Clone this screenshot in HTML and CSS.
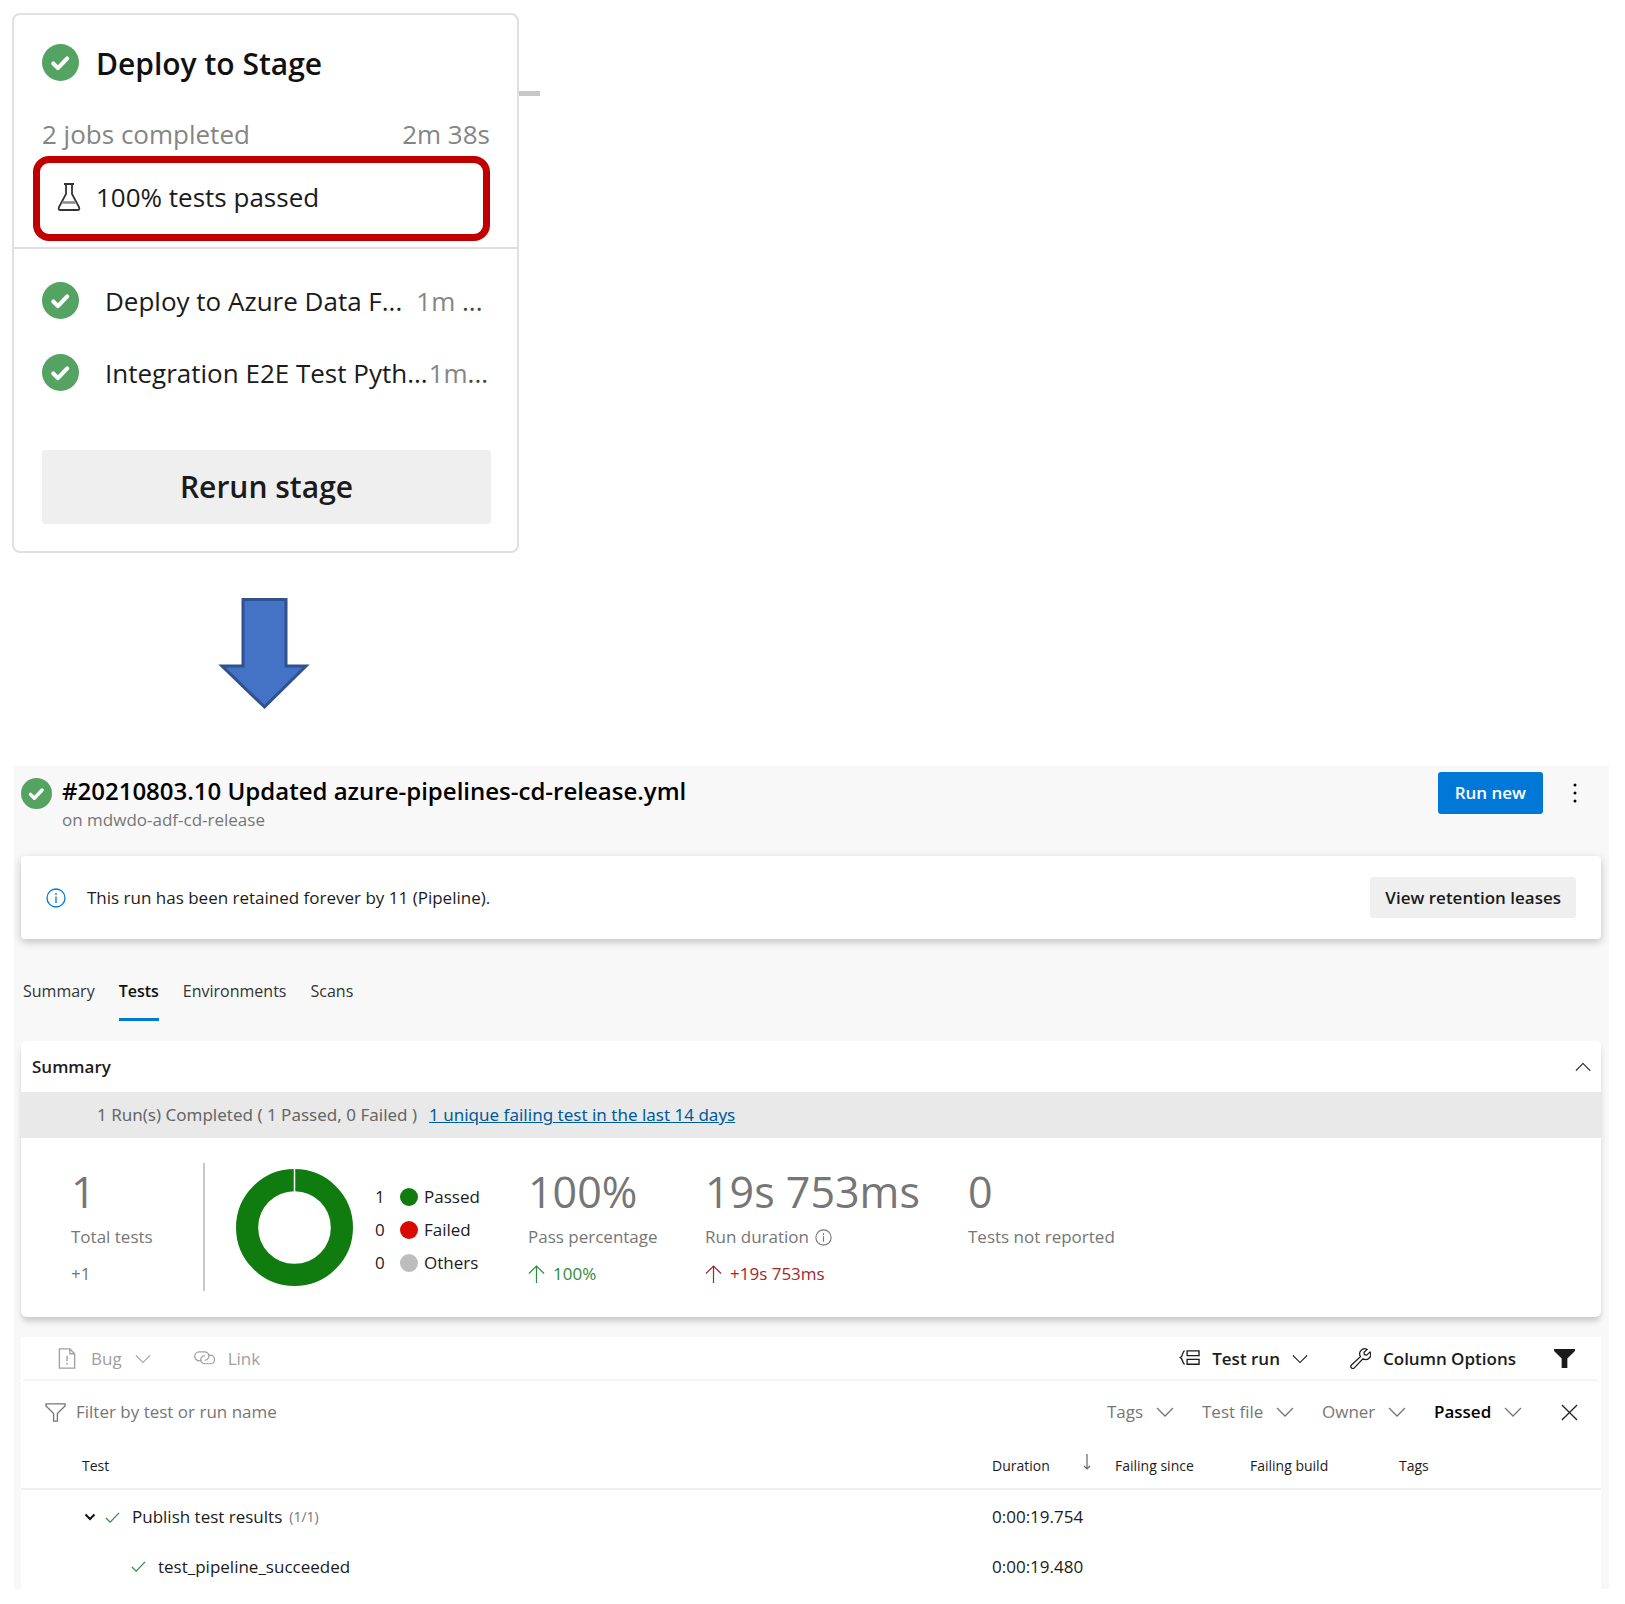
FILE: index.html
```html
<!DOCTYPE html>
<html lang="en">
<head>
<meta charset="utf-8">
<title>Pipeline test results</title>
<link rel="stylesheet" href="styles.css">
</head>
<body>
<svg class="defs" aria-hidden="true">
  <symbol id="ok" viewBox="0 0 36 36"><circle cx="18" cy="18" r="18" fill="#55a362"/><path d="M11 19l4.500 4.500 9-9.500" fill="none" stroke="#fff" stroke-width="4" stroke-linecap="round" stroke-linejoin="round"/></symbol>
  <symbol id="chev" viewBox="0 0 18 18"><path d="M1 5l8 8 8-8" fill="none" stroke="currentColor" stroke-width="1.300"/></symbol>
  <symbol id="tick" viewBox="0 0 16 16"><path d="M1 8.500l4.500 4.500L15 3" fill="none" stroke="#2f8a3b" stroke-width="1.300"/></symbol>
  <symbol id="info" viewBox="0 0 20 20"><circle cx="10" cy="10" r="9" fill="none" stroke="currentColor" stroke-width="1.300"/><path d="M10 8.500v6.500M10 5v2" stroke="currentColor" stroke-width="1.300"/></symbol>
  <symbol id="up" viewBox="0 0 18 20"><path d="M9 19V1M1 9l8-8 8 8" fill="none" stroke="currentColor" stroke-width="1.300"/></symbol>
</svg>

<section class="stage">
  <header class="stage-head">
    <div class="stage-title"><svg class="ok"><use href="#ok"/></svg><h2>Deploy to Stage</h2></div>
    <div class="stage-meta"><span>2 jobs completed</span><span>2m 38s</span></div>
    <div class="tests-passed">
      <svg class="flask" viewBox="0 0 24 30"><path d="M7 2h10M9 2v10L2 25q-1 3 1 3h18q2 0 1-3L15 12V2" fill="none" stroke="#333" stroke-width="1.800"/><path d="M5.500 20.500h13" stroke="#888" stroke-width="2.500"/></svg>
      <span>100% tests passed</span>
    </div>
  </header>
  <ul class="jobs">
    <li><svg class="ok"><use href="#ok"/></svg><span>Deploy to Azure Data F...</span><span class="time">1m <b>...</b></span></li>
    <li><svg class="ok"><use href="#ok"/></svg><span>Integration E2E Test Pyth...</span><span class="time tight">1m<b>...</b></span></li>
  </ul>
  <button class="rerun" type="button">Rerun stage</button>
</section>

<svg class="arrow" viewBox="0 0 92 112"><path d="M25 1.500h43V68h20L46.500 109 4 68h21z" fill="#4472c4" stroke="#2f528f" stroke-width="3"/></svg>

<main class="run">
  <header class="run-head">
    <svg class="ok-small"><use href="#ok"/></svg>
    <div class="run-name"><h1>#20210803.10 Updated azure-pipelines-cd-release.yml</h1><p>on mdwdo-adf-cd-release</p></div>
    <button class="primary" type="button">Run new</button>
    <button class="kebab" type="button" aria-label="More actions"><svg viewBox="0 0 4 20"><circle cx="2" cy="2" r="1.500"/><circle cx="2" cy="10" r="1.500"/><circle cx="2" cy="18" r="1.500"/></svg></button>
  </header>

  <section class="banner">
    <svg class="info"><use href="#info"/></svg>
    <p>This run has been retained forever by 11 (Pipeline).</p>
    <button class="grey" type="button">View retention leases</button>
  </section>

  <nav class="tabs">
    <a href="#summary">Summary</a>
    <a href="#tests" class="active" aria-current="page">Tests</a>
    <a href="#environments">Environments</a>
    <a href="#scans">Scans</a>
  </nav>

  <section class="summary">
    <header class="summary-head"><h3>Summary</h3><button type="button" aria-label="Collapse summary"><svg class="chev flip"><use href="#chev"/></svg></button></header>
    <div class="runs"><span>1 Run(s) Completed ( 1 Passed, 0 Failed )</span><a href="#failing">1 unique failing test in the last 14 days</a></div>
    <div class="stats">
      <div class="stat total"><strong>1</strong><span>Total tests</span><em>+1</em></div>
      <svg class="donut" viewBox="0 0 116 116"><circle cx="58" cy="58" r="47" fill="none" stroke="#107c10" stroke-width="22"/><path d="M58 0v23" stroke="#fff" stroke-width="1.500"/></svg>
      <ul class="legend">
        <li><span>1</span><i class="dot passed"></i>Passed</li>
        <li><span>0</span><i class="dot failed"></i>Failed</li>
        <li><span>0</span><i class="dot others"></i>Others</li>
      </ul>
      <div class="stat pass"><strong>100%</strong><span>Pass percentage</span><em class="good"><svg class="up"><use href="#up"/></svg>100%</em></div>
      <div class="stat duration"><strong>19s 753ms</strong><span>Run duration <svg class="info-small"><use href="#info"/></svg></span><em class="bad"><svg class="up"><use href="#up"/></svg>+19s 753ms</em></div>
      <div class="stat"><strong>0</strong><span>Tests not reported</span></div>
    </div>
  </section>

  <section class="results">
    <div class="toolbar">
      <button type="button" class="bug" disabled><svg class="icon" viewBox="0 0 20 22"><path d="M1.500 1h11l5 5v15h-16zM12.500 1v5h5" fill="none" stroke="currentColor" stroke-width="1.400"/><path d="M9.500 8v6M9.500 15.500v2" stroke="currentColor" stroke-width="1.400"/></svg>Bug<svg class="chev"><use href="#chev"/></svg></button>
      <button type="button" class="link" disabled><svg class="icon" viewBox="0 0 22 22"><path d="M8 13.500H5.500a4.500 4.500 0 0 1 0-9.500H11a4.500 4.500 0 0 1 4.200 6.500c-.700 1.500-2 2.500-4 2.500M14.500 7.500h2.500a4.500 4.500 0 0 1 0 9h-5.500a4.300 4.300 0 0 1-4-6.200c.700-1.500 2-2.300 4-2.300" fill="none" stroke="currentColor" stroke-width="1.300"/></svg>Link</button>
      <span class="grow"></span>
      <button type="button" class="group"><svg class="icon" viewBox="0 0 22 22"><path d="M6 3C3.500 3 4.500 8.500 1.500 10c3 1.500 2 7 4.500 7M8.500 3H21v5H8.500zM8.500 12H21v5H8.500z" fill="none" stroke="currentColor" stroke-width="1.400"/></svg>Test run<svg class="chev"><use href="#chev"/></svg></button>
      <button type="button" class="columns"><svg class="icon" viewBox="0 0 22 22"><path d="M18 1.500a5.300 5.300 0 0 0-7 7.500L1.500 17.800a2.100 2.100 0 0 0 3 3L13.500 11.300a5.300 5.300 0 0 0 7.500-7L17.500 7.500 15 7l-.300-2.500z" fill="none" stroke="currentColor" stroke-width="1.300"/></svg>Column Options</button>
      <button type="button" class="filter-toggle" aria-label="Toggle filters"><svg viewBox="0 0 22 20"><path d="M0 0h22v2l-8 8v10H8V10L0 2z" fill="currentColor"/></svg></button>
    </div>
    <div class="filters">
      <label class="search"><svg viewBox="0 0 22 20"><path d="M1 1h20v2l-8 8v8H9v-8L1 3z" fill="none" stroke="currentColor" stroke-width="1.400"/></svg><input type="text" placeholder="Filter by test or run name" aria-label="Filter by test or run name"></label>
      <label class="drop"><select aria-label="Tags"><option>Tags</option></select><svg class="chev big"><use href="#chev"/></svg></label>
      <label class="drop"><select aria-label="Test file"><option>Test file</option></select><svg class="chev big"><use href="#chev"/></svg></label>
      <label class="drop"><select aria-label="Owner"><option>Owner</option></select><svg class="chev big"><use href="#chev"/></svg></label>
      <label class="drop"><select class="chosen" aria-label="Outcome"><option>Passed</option></select><svg class="chev big"><use href="#chev"/></svg></label>
      <button type="button" class="close" aria-label="Clear filters"><svg viewBox="0 0 18 18"><path d="M1 1l16 16M17 1L1 17" stroke="currentColor" stroke-width="1.400"/></svg></button>
    </div>
    <table>
      <colgroup><col><col class="c-duration"><col class="c-since"><col class="c-build"><col class="c-tags"></colgroup>
      <thead><tr><th class="name">Test</th><th><span class="sorted">Duration<svg viewBox="0 0 8 16"><path d="M4 0v15M1 12l3 3 3-3" fill="none" stroke="#666" stroke-width="1.200"/></svg></span></th><th>Failing since</th><th>Failing build</th><th>Tags</th></tr></thead>
      <tbody>
        <tr><td><div class="node"><svg class="caret" viewBox="0 0 12 12"><path d="M1.500 3.500L6 8l4.500-4.500" fill="none" stroke="#111" stroke-width="2"/></svg><svg class="tick"><use href="#tick"/></svg>Publish test results<small>(1/1)</small></div></td><td>0:00:19.754</td><td></td><td></td><td></td></tr>
        <tr><td><div class="node child"><svg class="tick"><use href="#tick"/></svg>test_pipeline_succeeded</div></td><td>0:00:19.480</td><td></td><td></td><td></td></tr>
      </tbody>
    </table>
  </section>
</main>
</body>
</html>
```

FILE: styles.css
```css
* { box-sizing: border-box; }

body {
  margin: 0;
  padding: 13px 16px 16px 14px;
  background: #fff;
  color: #1b1b1b;
  font: 17px/24px "Open Sans", "Noto Sans", sans-serif;
}

h1, h2, h3, p, ul { margin: 0; padding: 0; font-weight: 600; }
p, ul { font-weight: 400; list-style: none; }
svg { flex: none; display: block; }
button, select, input { font: inherit; color: inherit; border: 0; background: none; padding: 0; margin: 0; }
button { display: flex; align-items: center; justify-content: center; }
.defs { position: absolute; width: 0; height: 0; }

/* Stage card */
.stage {
  position: relative;
  width: 507px;
  max-width: 100%;
  margin-left: -2px;
  border: 2px solid #e0e0e0;
  border-radius: 8px;
  font-size: 26px;
  line-height: 36px;
}
.stage::after {
  content: "";
  position: absolute;
  left: 100%;
  top: 76px;
  width: 21px;
  height: 5px;
  margin-left: 2px;
  background: #c8c8c8;
}
.stage-head { border-bottom: 2px solid #e0e0e0; padding: 29px 27px 6px 19px; }
.stage-title { display: flex; gap: 17px; padding-left: 9px; align-items: flex-start; }
.stage-title h2 { font-size: 30px; line-height: 40px; color: #111; }
.ok { width: 37px; height: 37px; }
.stage-meta { display: flex; justify-content: space-between; padding: 32px 0 4px 9px; color: #858585; }
.tests-passed {
  display: flex;
  align-items: center;
  gap: 15px;
  height: 85px;
  padding: 0 0 4px 17px;
  border: 7px solid #c00000;
  border-radius: 16px;
}
.flask { width: 24px; height: 30px; }
.jobs { padding: 33px 20px 0 28px; display: grid; gap: 35px; }
.jobs li { display: flex; align-items: center; gap: 14px; white-space: nowrap; }
.jobs li span:nth-of-type(1) { padding-left: 12px; }
.jobs .time { color: #858585; }
.jobs .tight { margin-left: -13px; }
.jobs b { font-weight: 400; color: #444; }
.rerun { width: calc(100% - 54px); height: 74px; margin: 59px 26px 27px 28px; border-radius: 4px; background: #efefef; font-size: 30px; font-weight: 600; }

.arrow { width: 92px; height: 112px; margin: 45px 0 56px 204px; }

/* Run page */
.run { background: #f8f8f8; padding: 6px 8px 0 7px; }
.run-head { display: flex; align-items: flex-start; }
.ok-small { width: 31px; height: 31px; margin: 6px 10px 0 0; }
.run-name { flex: 1; }
.run-name h1 { font-size: 24px; line-height: 37px; color: #000; }
.run-name p { color: #767676; line-height: 21px; }
.primary { height: 42px; padding: 0 17px; border-radius: 3px; background: #0078d7; color: #fff; font-weight: 600; }
.kebab { width: 16px; height: 42px; margin: 0 18px 0 24px; }
.kebab svg { width: 4px; height: 20px; }

.banner {
  display: flex;
  align-items: center;
  height: 83px;
  margin-top: 26px;
  padding: 0 25px;
  border-radius: 4px;
  background: #fff;
  box-shadow: 0 3px 8px rgba(0, 0, 0, .22);
}
.banner p { flex: 1; padding-left: 21px; }
.info { width: 20px; height: 20px; color: #0078d7; }
.grey { height: 41px; padding: 0 15px; border-radius: 3px; background: #efefef; font-weight: 600; }

.tabs { display: flex; gap: 24px; padding: 38px 2px 20px; font-size: 16px; }
.tabs a { color: #333; text-decoration: none; padding: 2px 0 15px; border-bottom: 3px solid transparent; }
.tabs .active { border-color: #0078d7; color: #111; font-weight: 600; }

.summary { border-radius: 6px; background: #fff; box-shadow: 0 5px 6px -1px rgba(0, 0, 0, .2); }
.summary-head { display: flex; justify-content: space-between; align-items: center; height: 51px; padding: 0 10px 0 11px; }
.summary-head h3 { font-size: 17px; }
.chev { width: 16px; height: 16px; }
.flip { transform: rotate(180deg); }
.runs { display: flex; gap: 12px; height: 46px; align-items: center; padding-left: 76px; background: #e9e9e9; color: #666; font-family: "Noto Sans", "Open Sans", sans-serif; }
.runs a { color: #005a9e; }
.stats { display: flex; padding: 25px 50px 26px; }
.stat { display: flex; flex-direction: column; color: #767676; }
.stat strong { font-size: 43px; line-height: 58px; font-weight: 400; padding-bottom: 2px; }
.stat span { display: flex; align-items: center; gap: 6px; line-height: 28px; }
.stat em { display: flex; align-items: center; gap: 8px; font-style: normal; line-height: 24px; padding-top: 11px; }
.total { width: 134px; border-right: 2px solid #c8c8c8; height: 128px; }
.donut { width: 117px; height: 117px; margin: 6px 22px 0 31px; }
.legend { width: 153px; padding-top: 17px; }
.legend li { display: flex; align-items: center; height: 33px; }
.legend span { width: 25px; }
.dot { width: 18px; height: 18px; border-radius: 50%; margin-right: 6px; }
.passed { background: #107c10; }
.failed { background: #da0a00; }
.others { background: #bdbdbd; }
.pass { width: 177px; }
.duration { width: 263px; }
.stat .good { color: #2f8a3b; }
.stat .bad { color: #a4262c; }
.up { width: 17px; height: 19px; }
.info-small { width: 17px; height: 17px; }

/* Results */
.results { margin-top: 20px; background: #fff; }
.toolbar { display: flex; height: 42px; align-items: center; padding: 1px 26px 0 36px; }
.toolbar button { font-weight: 600; gap: 12px; }
.toolbar button:disabled { color: #a0a0a0; font-weight: 400; gap: 13px; }
.icon { width: 21px; height: 21px; }
.toolbar .link { margin-left: 43px; }
.grow { flex: 1; }
.toolbar .columns { margin: 0 38px 0 42px; }
.filter-toggle svg, .search svg { width: 21px; height: 19px; }
.filters { display: flex; align-items: center; height: 64px; border-top: 2px solid #f5f5f5; border-radius: 6px; padding: 0 23px 0 24px; color: #767676; }
.search { flex: 1; display: flex; align-items: center; gap: 10px; }
.search input { flex: 1; outline: 0; }
.search input::placeholder { color: #767676; opacity: 1; }
.drop { display: flex; align-items: center; gap: 12px; margin-right: 28px; }
.drop select { appearance: none; }
.drop .chosen { color: #000; font-weight: 600; }
.big { width: 18px; height: 18px; }
.close { color: #222; margin-left: 11px; }
.close svg { width: 17px; height: 17px; }

table { width: 100%; border-collapse: collapse; table-layout: fixed; }
th { height: 46px; padding: 0; font-size: 14px; font-weight: 400; text-align: left; border-bottom: 2px solid #efefef; }
td { height: 51px; padding: 4px 0 0; }
tr:last-child td { height: 49px; }
th.name { padding-left: 61px; }
.c-duration { width: 123px; }
.c-since { width: 135px; }
.c-build { width: 149px; }
.c-tags { width: 202px; }
.sorted { display: flex; justify-content: space-between; padding-right: 24px; }
.sorted svg { width: 8px; height: 16px; }
.node { display: flex; align-items: center; padding-left: 63px; }
.child { padding-left: 110px; }
.caret { width: 12px; height: 12px; margin-right: 9px; }
.tick { width: 15px; height: 15px; margin-right: 12px; }
.node small { font-size: 14px; color: #767676; margin-left: 7px; }
```
